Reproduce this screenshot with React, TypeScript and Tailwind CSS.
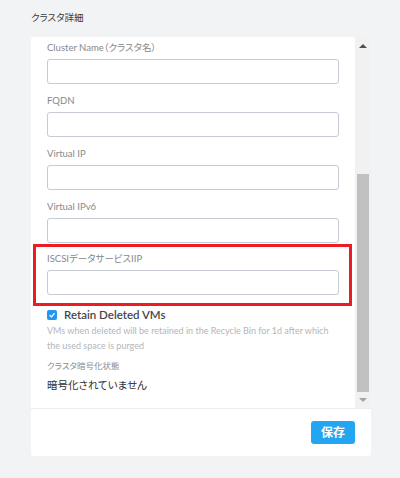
const font = "font-['Lato','Noto_Sans_CJK_JP',sans-serif]";

const Field = ({ label, last }: { label: string; last?: boolean }) => (
  <div className={last ? "mb-[1px]" : "mb-[10px]"}>
    <div className="h-[14px] leading-[14px] text-[9.5px] text-[#85888c] mb-[4px] [font-feature-settings:'palt']">
      {label}
    </div>
    <input
      type="text"
      className="block w-[292px] h-[25px] border border-[#c5cad3] rounded-[3px] bg-white outline-none"
    />
  </div>
);

const App = () => {
  return (
    <div className={`w-[400px] h-[478px] bg-[#f2f3f5] pt-[10px] ${font}`}>
      <div className="pl-[31px] h-[16px] leading-[16px] text-[9.5px] text-[#3a3a3a] [font-feature-settings:'palt']">
        クラスタ詳細
      </div>
      <div className="ml-[31px] mt-[11px] w-[340px] h-[419px] bg-white rounded-[3px] flex flex-col overflow-hidden">
        {/* scrolling form body */}
        <div className="h-[371px] flex">
          <div className="flex-1 pl-[16px] pt-[4px] overflow-hidden">
            <Field label="Cluster Name（クラスタ名）" />
            <Field label="FQDN" />
            <Field label="Virtual IP" />
            <Field label="Virtual IPv6" last />
            <div className="-ml-[14px] w-[319px] border-[3px] border-[#ec1c24] pt-[5px] pl-[11px] pb-[8px]">
              <div className="h-[14px] leading-[14px] text-[9.5px] text-[#85888c] mb-[4px] [font-feature-settings:'palt']">
                ISCSIデータサービスIIP
              </div>
              <input
                type="text"
                className="block w-[292px] h-[25px] border border-[#c5cad3] rounded-[3px] bg-white outline-none"
              />
            </div>
            <div className="mt-[2px] h-[14px] flex items-center gap-[7px]">
              <div className="w-[10px] h-[10px] rounded-[2px] bg-[#2196f3] flex items-center justify-center">
                <svg width="8" height="8" viewBox="0 0 10 10">
                  <path d="M2 5.2 L4.2 7.3 L8.2 2.8" fill="none" stroke="white" strokeWidth="1.6" />
                </svg>
              </div>
              <span className="text-[11.5px] font-semibold text-[#45474a]">Retain Deleted VMs</span>
            </div>
            <p className="mt-[1px] w-[292px] text-[9px] leading-[15px] text-[#b3b6ba]">
              VMs when deleted will be retained in the Recycle Bin for 1d after which the used space is purged
            </p>
            <div className="mt-[6px] h-[14px] leading-[14px] text-[8.5px] text-[#8a8d91] [font-feature-settings:'palt']">
              クラスタ暗号化状態
            </div>
            <div className="mt-[4px] h-[16px] leading-[16px] text-[10.5px] text-[#2e3033] [font-feature-settings:'palt']">
              暗号化されていません
            </div>
          </div>
          {/* scrollbar */}
          <div className="w-[16px] bg-[#f1f1f1] flex flex-col">
            <div className="h-[17px] flex items-end justify-center pb-[6px]">
              <div className="w-0 h-0 border-l-[4px] border-r-[4px] border-b-[4px] border-l-transparent border-r-transparent border-b-[#505050]" />
            </div>
            <div className="h-[120px]" />
            <div className="h-[218px] mx-[2px] bg-[#c1c1c1]" />
            <div className="h-[16px] flex items-start justify-center pt-[6px]">
              <div className="w-0 h-0 border-l-[4px] border-r-[4px] border-t-[4px] border-l-transparent border-r-transparent border-t-[#a3a3a3]" />
            </div>
          </div>
        </div>
        {/* footer */}
        <div className="border-t border-[#ececec] flex-1 flex justify-end pt-[12px] pr-[16px]">
          <button className="w-[44px] h-[23px] bg-[#22a6f2] rounded-[3px] text-white text-[12px] font-bold">
            保存
          </button>
        </div>
      </div>
    </div>
  );
};

export default App;
